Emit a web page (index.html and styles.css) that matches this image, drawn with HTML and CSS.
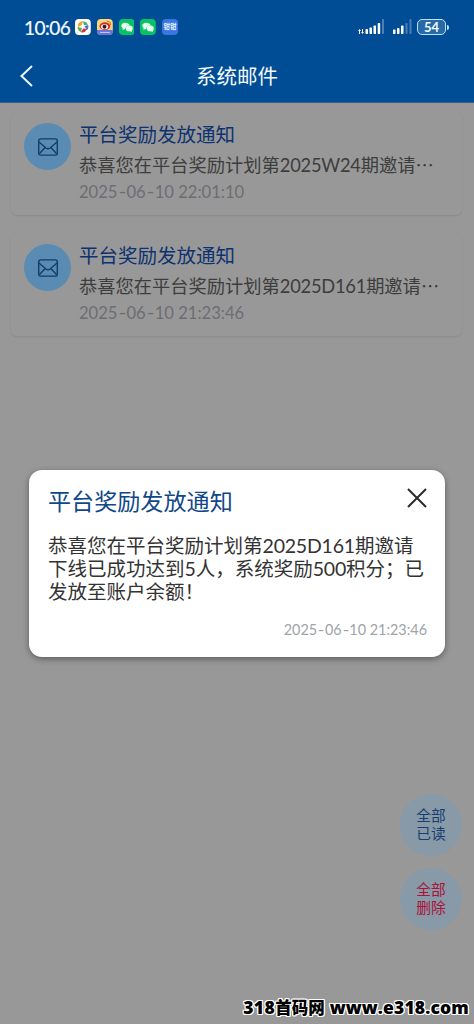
FILE: index.html
```html
<!DOCTYPE html>
<html lang="zh-CN">
<head>
<meta charset="utf-8">
<meta name="viewport" content="width=device-width">
<title>系统邮件</title>
<link rel="stylesheet" href="styles.css">
</head>
<body>
<div class="screen">
  <header class="top">
    <div class="status">
      <span class="clock">10:06</span>
      <div class="apps">
        <svg class="app" viewBox="0 0 16 16"><rect width="16" height="16" rx="4" fill="#fff"/><path d="M3 8Q2 3 8 2L7 6Z" fill="#f2a22c"/><path d="M8 2.5Q12 2 13 6L9 6Z" fill="#42b56a"/><path d="M13.500 6Q14 10 12 11L9.500 7Z" fill="#3979d7"/><path d="M6 13Q9 15 12.500 10L8.500 9.500Z" fill="#dc2b3f"/><path d="M2.500 8Q3 12 6 13L7 9Z" fill="#54ad4e"/></svg>
        <svg class="app" viewBox="0 0 16 16"><rect width="16" height="16" rx="4" fill="#f9d77b"/><path d="M0 11H16V12Q16 16 12 16H4Q0 16 0 12Z" fill="#6874dc"/><ellipse cx="8" cy="7.3" rx="5.4" ry="4" fill="#d62b25"/><ellipse cx="7.7" cy="7.8" rx="3.7" ry="2.6" fill="#fff"/><circle cx="7.6" cy="7.8" r="2" fill="#351b20"/><path d="M10 2Q14 2 14 6" fill="none" stroke="#e75b29"/><path d="M3 13.5H13" stroke="#c8ccfa"/></svg>
        <svg class="app" viewBox="0 0 16 16"><rect width="16" height="16" rx="4" fill="#08c265"/><path d="M2.3 6.5C2.3 2.9 10 2.4 10.8 6.4C8 6.3 6.2 8 6.5 10L3.3 10.8L3.7 9.2Q2.3 8.2 2.3 6.5Z" fill="#e7fff0"/><ellipse cx="10.4" cy="9.5" rx="3.5" ry="2.9" fill="#e7fff0"/><path d="M11 12L13 13L12.7 10.8Z" fill="#e7fff0"/></svg>
        <svg class="app" viewBox="0 0 16 16"><rect width="16" height="16" rx="4" fill="#08c265"/><path d="M2.3 6.5C2.3 2.9 10 2.4 10.8 6.4C8 6.3 6.2 8 6.5 10L3.3 10.8L3.7 9.2Q2.3 8.2 2.3 6.5Z" fill="#e7fff0"/><ellipse cx="10.4" cy="9.5" rx="3.5" ry="2.9" fill="#e7fff0"/><path d="M11 12L13 13L12.7 10.8Z" fill="#e7fff0"/></svg>
        <span class="app app-blue">钳钳</span>
      </div>
      <svg class="signals" viewBox="0 0 56 16"><g fill="#fff"><path d="M1.5 10L3 12H2V15H1V12H0ZM4 10H5V13H6L4.5 15L3 13H4Z"/><rect x="7.500" y="10" width="2.500" height="5" rx=".7"/><rect x="11.500" y="8.500" width="2.500" height="6.500" rx=".7"/><rect x="15.500" y="6.500" width="2.500" height="8.500" rx=".7"/><rect x="19.700" y="4" width="2.500" height="11" rx=".7"/><rect x="35" y="10.500" width="2.500" height="4.500" rx=".7"/><rect x="39" y="9" width="2.500" height="6" rx=".7"/><rect x="43" y="6.500" width="2.500" height="8.500" rx=".7"/></g><g fill="#4c7fb6"><rect x="24" y="0" width="2" height="15" rx=".7"/><rect x="47.500" y="4" width="2" height="11" rx=".7"/><rect x="51.500" y="0" width="2" height="15" rx=".7"/></g></svg>
      <span class="battery">54</span><span class="battery-tip"></span>
    </div>
    <div class="nav">
      <svg class="back" viewBox="0 0 14 22"><path d="M12 1L1.500 11L12 21" fill="none" stroke="#e9f8ff" stroke-width="2"/></svg>
      <h1 class="nav-title">系统邮件</h1>
    </div>
  </header>

  <main class="list">
    <article class="mail">
      <span class="avatar"><svg class="envelope" viewBox="0 0 20 18"><g fill="none" stroke="#123d68" stroke-width="1.400" stroke-linejoin="round"><rect x=".7" y=".9" width="18.600" height="16.200" rx="1.800"/><path d="M1 4L8 10Q10 11.600 12 10L19 4M1.500 15.500L7 9.800M18.500 15.500L13 9.800"/></g></svg></span>
      <div class="mail-text">
        <h2 class="mail-title">平台奖励发放通知</h2>
        <p class="mail-body">恭喜您在平台奖励计划第<span class="code">2025W24</span>期邀请<span class="dots">⋯</span></p>
        <time class="mail-time">2025<i>-</i>06<i>-</i>10 22:01:10</time>
      </div>
    </article>
    <article class="mail">
      <span class="avatar"><svg class="envelope" viewBox="0 0 20 18"><g fill="none" stroke="#123d68" stroke-width="1.400" stroke-linejoin="round"><rect x=".7" y=".9" width="18.600" height="16.200" rx="1.800"/><path d="M1 4L8 10Q10 11.600 12 10L19 4M1.500 15.500L7 9.800M18.500 15.500L13 9.800"/></g></svg></span>
      <div class="mail-text">
        <h2 class="mail-title">平台奖励发放通知</h2>
        <p class="mail-body">恭喜您在平台奖励计划第<span class="code">2025D161</span>期邀请<span class="dots">⋯</span></p>
        <time class="mail-time">2025<i>-</i>06<i>-</i>10 21:23:46</time>
      </div>
    </article>
  </main>

  <div class="actions">
    <button class="fab">全部<br>已读</button>
    <button class="fab fab-delete">全部<br>删除</button>
  </div>

  <section class="dialog">
    <div class="dialog-head">
      <h2 class="dialog-title">平台奖励发放通知</h2>
      <svg class="close" viewBox="0 0 20 20"><path d="M1 1L19 19M19 1L1 19" stroke="#292929" stroke-width="2"/></svg>
    </div>
    <p class="dialog-body">恭喜您在平台奖励计划第<span class="code">2025D161</span>期邀请<br>下线已成功达到<span class="code">5</span>人，系统奖励<span class="code">500</span>积分；已<br>发放至账户余额！</p>
    <time class="dialog-time">2025<i>-</i>06<i>-</i>10 21:23:46</time>
  </section>

  <div class="watermark"><span class="wm-name"><span class="wm-num">318</span>首码网</span><span class="wm-url">www.e318.com</span></div>
</div>
</body>
</html>
```
FILE: styles.css
```css
* { box-sizing: border-box; }
body { margin: 0; background: #989898; font-family: "Noto Sans CJK SC", sans-serif; }
h1, h2, p { margin: 0; font-weight: 400; }
.screen { position: relative; width: 474px; height: 1024px; overflow: hidden; background: #989898; }

.top { height: 103px; background: #004c95; border-bottom: 1px solid #315f87; color: #f4fbff; }
.status { display: flex; align-items: center; height: 54px; padding: 0 25px 0 24px; }
.clock { width: 51px; padding-top: 1px; font: 400 19px/24px Lato, sans-serif; letter-spacing: -.5px; -webkit-text-stroke: .2px #f4fbff; white-space: nowrap; }
.apps { display: flex; gap: 6px; }
.app { display: block; width: 15.800px; height: 16px; }
.app-blue { border-radius: 4px; background: #3976e2; color: #e8f3ff; font-size: 6.500px; line-height: 15px; text-align: center; font-weight: 700; white-space: nowrap; }
.signals { width: 56px; height: 16px; margin-left: auto; }
.battery { width: 29px; height: 16px; margin-left: 3px; border: 1.500px solid #b9e2ff; border-radius: 5px; background: #2869a8; font: 700 13px/14px Lato, sans-serif; text-align: center; }
.battery-tip { width: 2px; height: 5px; margin-left: 1px; border-radius: 0 2px 2px 0; background: #b9e2ff; }
.nav { display: grid; grid-template-columns: 40px 1fr 40px; align-items: center; height: 43px; }
.back { width: 14px; height: 22px; margin-left: 20px; }
.nav-title { margin-top: -2px; font-size: 20.500px; line-height: 30px; font-weight: 400; text-align: center; }

.list { display: flex; flex-direction: column; gap: 18px; padding: 9px 12px 0 11px; }
.mail { display: flex; gap: 8px; height: 103px; padding: 8px 14px 0 13px; border-radius: 6px; box-shadow: 0 1px 2px rgba(0, 0, 0, .1); }
.avatar { display: flex; flex: none; align-items: center; justify-content: center; width: 47px; height: 47px; margin-top: 3px; border-radius: 50%; background: #5a8bb3; }
.envelope { width: 20px; height: 18px; }
.mail-text { display: flex; flex-direction: column; }
.mail-title { font-size: 19.500px; line-height: 28px; color: #0d3270; }
.mail-body { margin-top: 1px; font-size: 18.250px; line-height: 30px; color: #3d3d3d; white-space: nowrap; }
.mail-time { margin-top: 1px; font: 400 16.600px/24px Lato, sans-serif; color: #6d6d73; white-space: nowrap; }
i { display: inline-block; width: .54em; font-style: normal; transform: scaleX(1.3); text-align: center; }
.code { font-family: Lato, sans-serif; line-height: 1; letter-spacing: -.2px; }
.dots { font-family: "Noto Sans CJK SC", sans-serif; }

.actions { position: absolute; left: 400px; top: 794px; display: flex; flex-direction: column; gap: 12px; }
.fab { width: 62px; height: 62px; padding: 0 0 3px; border: 0; border-radius: 50%; background: #8899a7; color: #163f70; font: 400 14.700px/17.500px "Noto Sans CJK SC", sans-serif; }
.fab-delete { color: #aa1238; }

.dialog { position: absolute; left: 29px; top: 470px; display: flex; flex-direction: column; width: 416px; height: 187px; padding: 13px 18px 0 19px; border-radius: 13px; background: #fff; box-shadow: 0 2px 6px rgba(0, 0, 0, .4); }
.dialog-head { display: flex; justify-content: space-between; height: 50px; }
.dialog-title { font-size: 23.100px; line-height: 35px; color: #10478a; }
.close { width: 20px; height: 20px; margin-top: 5px; }
.dialog-body { font-size: 19.500px; line-height: 23px; color: #333; white-space: nowrap; }
.dialog-time { margin-top: 17px; font: 400 14.400px/22px Lato, sans-serif; color: #a0a4aa; text-align: right; white-space: nowrap; }

.watermark { position: absolute; right: 5px; bottom: 5px; display: flex; align-items: baseline; gap: 5px; color: #000; font: 900 16.500px/24px "Noto Sans CJK SC", sans-serif; white-space: nowrap; text-shadow: 1px 0 #fff, -1px 0 #fff, 0 1px #fff, 0 -1px #fff, 1px 1px #fff, -1px -1px #fff, 1px -1px #fff, -1px 1px #fff; }
.wm-num, .wm-url { font: 800 17.500px/24px "Open Sans", sans-serif; letter-spacing: .15px; }
.wm-num { letter-spacing: .4px; }
```
